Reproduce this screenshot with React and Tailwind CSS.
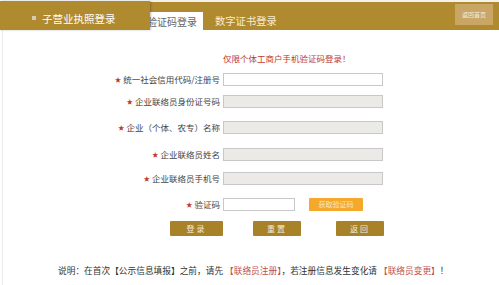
export default function App() {
  const font = { fontFamily: '"Noto Sans CJK SC", "Noto Sans", sans-serif' };
  const rows = [
    { label: "统一社会信用代码/注册号", mt: "mt-[9px]", bg: "bg-white" },
    { label: "企业联络员身份证号码", mt: "mt-[9px]", bg: "bg-[#ebeae6]" },
    { label: "企业（个体、农专）名称", mt: "mt-[13px]", bg: "bg-[#ebeae6]" },
    { label: "企业联络员姓名", mt: "mt-[14px]", bg: "bg-[#ebeae6]" },
    { label: "企业联络员手机号", mt: "mt-[11px]", bg: "bg-[#ebeae6]" },
  ];
  return (
    <div
      className="w-[499px] h-[285px] bg-white overflow-hidden flex flex-col"
      style={font}
    >
      {/* header */}
      <div className="h-[30px] flex shrink-0">
        <div className="relative z-10 w-[150px] h-[29px] mt-[1px] bg-[#b08a2f] shadow-[1px_0_2px_rgba(0,0,0,0.25)] flex items-center pt-[7px] pl-[32px] gap-[6px]">
          <span className="w-[4px] h-[4px] bg-[#d8ccb0] mt-[-2px]"></span>
          <span className="text-[10.5px] text-white leading-none">子营业执照登录</span>
        </div>
        <div className="flex-1 flex flex-col">
          <div className="h-[2px] bg-[#f4f1ea]"></div>
          <div className="flex-1 bg-[#b08a2f] flex items-end">
            <div className="h-[18px] w-[56px] -ml-[3px] bg-white flex items-center justify-end pr-[6px] pt-[1px]">
              <span className="text-[10px] text-[#666] leading-none whitespace-nowrap">验证码登录</span>
            </div>
            <div className="h-[18px] ml-[12px] flex items-center pt-[1px]">
              <span className="text-[10.3px] text-[#f6ecd6] leading-none">数字证书登录</span>
            </div>
            <div className="flex-1"></div>
            <div className="self-start mt-[2px] mr-[6px] w-[38px] h-[21px] bg-[#c9a566] flex items-center justify-center">
              <span className="text-[6px] text-[#f6ecd6] leading-none">返回首页</span>
            </div>
          </div>
        </div>
      </div>

      {/* body */}
      <div className="flex-1 flex">
        <div className="ml-[2px] w-[1px] bg-[#ebebeb]"></div>
        <div className="flex-1 flex flex-col">
          <div className="mt-[22px] pl-[220px] h-[12px] flex items-center">
            <span className="text-[8.5px] text-[#c0392b] leading-none">仅限个体工商户手机验证码登录！</span>
          </div>
          {rows.map((r, i) => (
            <div key={i} className={`${r.mt} flex items-center h-[13px]`}>
              <div className="w-[217px] flex items-center justify-end text-[8.5px] leading-none text-[#444] whitespace-nowrap">
                <span className="text-[#c0392b] text-[6.5px] mr-[2px]">★</span>
                {r.label}
              </div>
              <div className={`ml-[3px] w-[160px] h-[13px] border border-[#c8c8c8] ${r.bg}`}></div>
            </div>
          ))}
          <div className="mt-[13px] flex items-center h-[13px]">
            <div className="w-[217px] flex items-center justify-end text-[8.5px] leading-none text-[#444]">
              <span className="text-[#c0392b] text-[6.5px] mr-[2px]">★</span>验证码
            </div>
            <div className="ml-[3px] w-[72px] h-[13px] border border-[#c8c8c8] bg-white"></div>
            <div className="ml-[14px] w-[54px] h-[13px] bg-[#f4a82c] rounded-[1px] flex items-center justify-center">
              <span className="text-[7px] text-[#fbe6c4] leading-none">获取验证码</span>
            </div>
          </div>
          <div className="mt-[10px] flex h-[15px] pl-[167px]">
            <div className="w-[53px] h-[15px] bg-[#a88229] rounded-[1px] flex items-center justify-center">
              <span className="text-[8px] text-[#f4ead6] leading-none tracking-[2px]">登录</span>
            </div>
            <div className="ml-[30px] w-[48px] h-[15px] bg-[#a88229] rounded-[1px] flex items-center justify-center">
              <span className="text-[8px] text-[#f4ead6] leading-none tracking-[2px]">重置</span>
            </div>
            <div className="ml-[35px] w-[48px] h-[15px] bg-[#a88229] rounded-[1px] flex items-center justify-center">
              <span className="text-[8px] text-[#f4ead6] leading-none tracking-[2px]">返回</span>
            </div>
          </div>
          <div className="mt-[29px] pl-[55px] h-[12px] flex items-center">
            <span className="text-[8.7px] text-[#333] leading-none whitespace-nowrap">
              说明：在首次【公示信息填报】之前，请先
              <span className="text-[#c0504d]"> 【联络员注册】</span>
              ，若注册信息发生变化请
              <span className="text-[#c0504d]"> 【联络员变更】</span>
              ！
            </span>
          </div>
        </div>
      </div>
    </div>
  );
}
